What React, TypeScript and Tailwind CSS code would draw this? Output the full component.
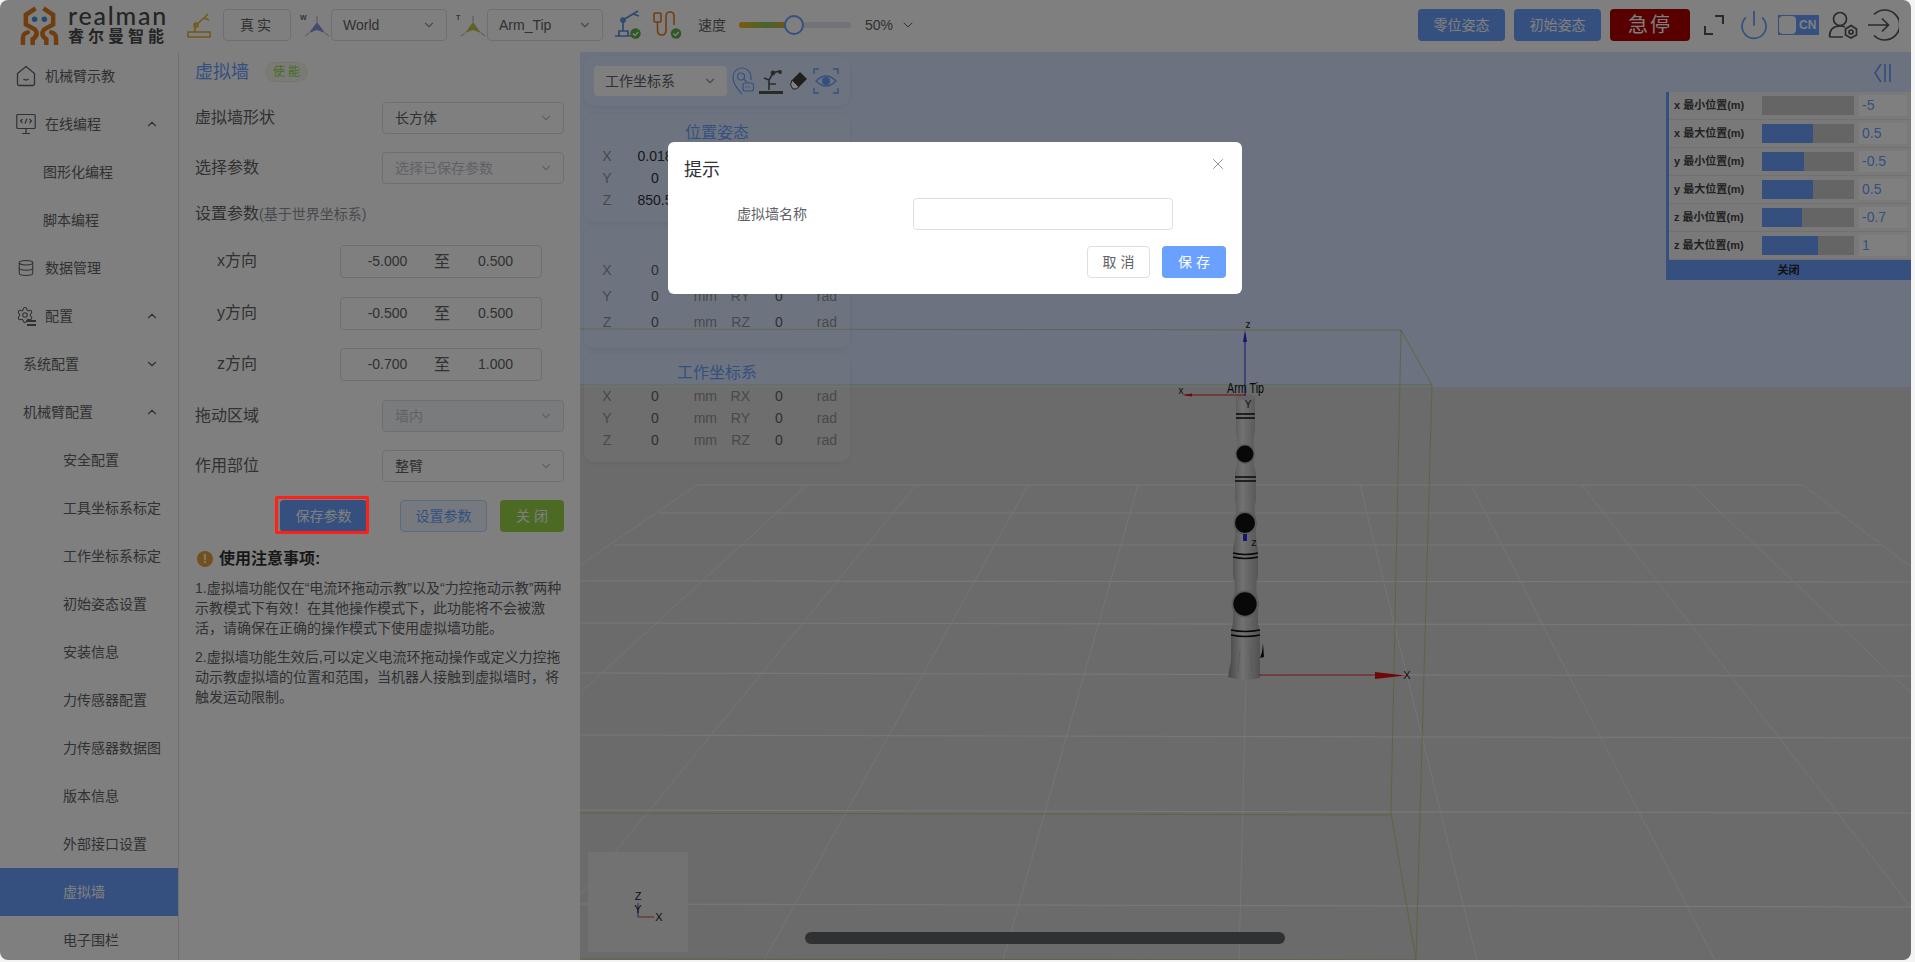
import React from 'react';
import { ChevronDown, ChevronUp, Database, Settings, Power, X } from 'lucide-react';

const menu = [
  { label: '机械臂示教', pad: 'pl-[16px]', icon: 'home' },
  { label: '在线编程', pad: 'pl-[16px]', icon: 'code', arrow: 'up' },
  { label: '图形化编程', pad: 'pl-[43px]' },
  { label: '脚本编程', pad: 'pl-[43px]' },
  { label: '数据管理', pad: 'pl-[16px]', icon: 'data' },
  { label: '配置', pad: 'pl-[16px]', icon: 'config', arrow: 'up' },
  { label: '系统配置', pad: 'pl-[23px]', arrow: 'down' },
  { label: '机械臂配置', pad: 'pl-[23px]', arrow: 'up' },
  { label: '安全配置', pad: 'pl-[63px]' },
  { label: '工具坐标系标定', pad: 'pl-[63px]' },
  { label: '工作坐标系标定', pad: 'pl-[63px]' },
  { label: '初始姿态设置', pad: 'pl-[63px]' },
  { label: '安装信息', pad: 'pl-[63px]' },
  { label: '力传感器配置', pad: 'pl-[63px]' },
  { label: '力传感器数据图', pad: 'pl-[63px]' },
  { label: '版本信息', pad: 'pl-[63px]' },
  { label: '外部接口设置', pad: 'pl-[63px]' },
  { label: '虚拟墙', pad: 'pl-[63px]', active: true },
  { label: '电子围栏', pad: 'pl-[63px]' },
];

const limits = [
  { label: 'x 最小位置(m)', fill: 0, value: '-5' },
  { label: 'x 最大位置(m)', fill: 51, value: '0.5' },
  { label: 'y 最小位置(m)', fill: 42, value: '-0.5' },
  { label: 'y 最大位置(m)', fill: 51, value: '0.5' },
  { label: 'z 最小位置(m)', fill: 40, value: '-0.7' },
  { label: 'z 最大位置(m)', fill: 56, value: '1' },
];

const horizontals = [
  [697, 485, 1803, 485], [660, 513, 1839, 513], [615, 545, 1881, 545], [580, 581, 1911, 582],
  [580, 623, 1911, 625], [580, 673, 1911, 676], [580, 735, 1911, 738], [580, 810, 1911, 813], [580, 904, 1911, 907],
];

const fans = [
  [697, 485, 580, 565], [807, 485, 580, 693], [916, 485, 580, 895], [1028, 485, 764, 960], [1138, 485, 1003, 960],
  [1246, 680, 1239, 960], [1360, 485, 1477, 960], [1471, 485, 1715, 960], [1582, 485, 1911, 907], [1692, 485, 1911, 693],
  [1803, 485, 1911, 567],
];

const boxLines = [
  [580, 329, 1401, 330], [580, 385, 1432, 385], [1401, 330, 1432, 385], [1401, 330, 1391, 813], [1432, 385, 1416, 960],
  [580, 813, 1391, 815], [1391, 813, 1416, 960], [580, 959, 1416, 960],
];

function SidebarIcon({ name }: { name?: string }) {
  if (name === 'home') {
    return (
      <svg viewBox="0 0 20 22" className="w-5 h-[22px]" fill="none" stroke="#606266" strokeWidth="1.3">
        <path d="M10 1.5 L18.5 8.5 V19 a1.5 1.5 0 0 1 -1.5 1.5 H3 a1.5 1.5 0 0 1 -1.5 -1.5 V8.5 Z" />
        <path d="M7.5 14 q2.5 2 5 0" />
      </svg>
    );
  }
  if (name === 'code') {
    return (
      <svg viewBox="0 0 20 22" className="w-5 h-[22px]" fill="none" stroke="#606266" strokeWidth="1.2">
        <rect x="0.8" y="1.5" width="18.4" height="14" rx="1" />
        <path d="M6.5 6 L4.5 8 L6.5 10 M13.5 6 L15.5 8 L13.5 10 M11 5.5 L9 10.5 M10 15.5 V20 M6 20.5 H14" />
      </svg>
    );
  }
  if (name === 'data') return <Database className="w-[18px] h-5 mx-px text-[#606266]" strokeWidth={1.4} />;
  if (name === 'config') {
    return (
      <span className="relative w-5 h-5 block">
        <Settings className="w-[18px] h-[18px] text-[#606266]" strokeWidth={1.4} />
        <span className="absolute right-0 bottom-0 w-[9px] h-[6px] border-y-2 border-[#606266] bg-white" />
      </span>
    );
  }
  return null;
}

function Select({ text, placeholder, disabled }: { text: string; placeholder?: boolean; disabled?: boolean }) {
  return (
    <div
      className={`w-[182px] h-8 flex items-center justify-between pl-3 pr-[10px] border border-[#dcdfe6] rounded text-[14px] ${
        disabled ? 'bg-[#f5f7fa] text-[#c0c4cc]' : placeholder ? 'bg-white text-[#c0c4cc]' : 'bg-white text-[#606266]'
      }`}
    >
      <span>{text}</span>
      <ChevronDown className="w-[14px] h-[14px] text-[#c0c4cc]" />
    </div>
  );
}

function RangeRow({ label, from, to, className }: { label: string; from: string; to: string; className: string }) {
  return (
    <div className={`flex items-center h-[33px] pl-[38px] ${className}`}>
      <span className="w-[123px] pb-[2px] text-[16px] text-[#606266]">{label}</span>
      <div className="w-[202px] h-[33px] flex items-center border border-[#dcdfe6] rounded text-[14px] text-[#606266]">
        <span className="w-[93px] text-center">{from}</span>
        <span className="w-4 text-center text-[16px]">至</span>
        <span className="flex-1 text-center">{to}</span>
      </div>
    </div>
  );
}

function PoseCard({ title, rows, className, rowClass, dark }: { title?: string; rows: string[][]; className: string; rowClass: string; dark?: boolean }) {
  return (
    <div className={`rounded-[10px] bg-white/15 shadow-[0_1px_4px_rgba(0,0,0,0.05)] ${className}`}>
      <div className="h-[23px] text-center text-[16px] leading-[22px] text-[#6aa1ff]">{title}</div>
      {rows.map((r) => (
        <div key={r[0]} className={`grid grid-cols-[46px_50px_37px_33px_58px_29px] items-center text-[14px] leading-[22px] ${rowClass}`}>
          <span className="text-center text-[#909399]">{r[0]}</span>
          <span className={`text-center whitespace-nowrap ${dark ? 'text-[#303133]' : 'text-[#606266]'}`}>{r[1]}</span>
          <span className="text-right text-[#909399]">mm</span>
          <span className="text-right text-[#909399]">R{r[0]}</span>
          <span className="text-center text-[#606266]">0</span>
          <span className="text-right text-[#909399]">rad</span>
        </div>
      ))}
    </div>
  );
}

function Logo() {
  return (
    <div className="flex items-center w-[187px] h-full">
      <svg viewBox="0 0 40 40" className="ml-[20px] w-[39px] h-[39px]" fill="none" stroke="#e07d1c" strokeWidth="4.6">
        <path d="M16 2.5 L6 9 V19 L16 24.5" />
        <path d="M24 2.5 L34 9 V19 L24 24.5" />
        <path d="M3 39 V33 Q3 28 8 27 M37 39 V33 Q37 28 32 27" strokeLinecap="round" />
        <path d="M16 25 Q19 30 13 34 V39 M24 25 Q21 30 27 34 V39" strokeLinecap="round" />
        <circle cx="15" cy="13.5" r="2.8" fill="#4d8fdc" stroke="none" />
        <circle cx="25" cy="13.5" r="2.8" fill="#4d8fdc" stroke="none" />
      </svg>
      <div className="ml-[9px] flex flex-col">
        <span className="font-['Lato',sans-serif] font-medium text-[25px] leading-[22px] tracking-[1.8px] text-[#4a4a4a] -mt-[2px]">realman</span>
        <span className="mt-[3px] text-[16px] leading-[15px] font-bold tracking-[4px] whitespace-nowrap text-[#4a4a4a]">睿尔曼智能</span>
      </div>
    </div>
  );
}

function ArmIcon() {
  return (
    <svg viewBox="0 0 24 26" className="w-6 h-[26px]" fill="none" stroke="#e8b232" strokeWidth="1.6">
      <rect x="1" y="20" width="22" height="5" />
      <path d="M8 20 V15 L9 13 L17 6 M17 6 L21 2 M17 6 L22 8" />
      <circle cx="9" cy="13" r="2" />
    </svg>
  );
}

function FrameIcon({ letter, color }: { letter: string; color: string }) {
  return (
    <svg viewBox="0 0 30 24" className="w-[30px] h-6">
      <text x="0" y="7" fontSize="7" fontWeight="700" fill="#666">{letter}</text>
      <path d="M17 9 L9 20 L17 17 L25 20 Z" fill={color} />
      <path d="M17 3 V9" stroke="#aaa" strokeWidth="1" />
      <path d="M5 23 L9 20 M25 20 L29 23" stroke="#aaa" strokeWidth="1" />
    </svg>
  );
}

function CheckBadge({ x, y }: { x: number; y: number }) {
  return (
    <g>
      <circle cx={x} cy={y} r="5.2" fill="#5fb04a" stroke="none" />
      <path d={`M${x - 2.6} ${y} l2 2 l3.4 -3.6`} fill="none" stroke="#fff" strokeWidth="1.4" />
    </g>
  );
}

function Header() {
  return (
    <header className="h-[52px] pb-[2px] flex items-center shrink-0 bg-white">
      <Logo />
      <ArmIcon />
      <div className="ml-3 w-[68px] h-8 flex items-center justify-center border border-[#dcdfe6] rounded text-[14px] tracking-[3px] text-[#606266]">真实</div>
      <div className="ml-[9px]"><FrameIcon letter="W" color="#8a96e0" /></div>
      <div className="ml-px w-[116px] h-8 flex items-center justify-between pl-[11px] pr-[10px] border border-[#dcdfe6] rounded text-[14px] text-[#606266]">
        World<ChevronDown className="w-[14px] h-[14px] text-[#909399]" />
      </div>
      <div className="ml-[9px]"><FrameIcon letter="T" color="#c4c450" /></div>
      <div className="ml-px w-[116px] h-8 flex items-center justify-between pl-[11px] pr-[10px] border border-[#dcdfe6] rounded text-[14px] text-[#606266]">
        Arm_Tip<ChevronDown className="w-[14px] h-[14px] text-[#909399]" />
      </div>
      <svg viewBox="0 0 28 30" className="ml-[11px] w-7 h-[30px]" fill="none" stroke="#5c8fe0" strokeWidth="1.7">
        <path d="M1 26 H18 M5 26 V21 H14 V26 M9 21 V10 L19 4 M19 4 L24 1 M19 4 L25 6" />
        <circle cx="9" cy="10" r="2" />
        <CheckBadge x={21.5} y={23.5} />
      </svg>
      <svg viewBox="0 0 30 30" className="ml-[11px] w-[30px] h-[30px]" fill="none" stroke="#e07d1c" strokeWidth="1.6">
        <rect x="1" y="3" width="7" height="9" rx="1" />
        <path d="M4.5 12 V20 Q4.5 25 9 25 Q13 25 13 20 V6 Q13 2 17 2 Q21 2 21 6 V15" />
        <CheckBadge x={23} y={23.5} />
      </svg>
      <span className="ml-[15px] text-[14px] text-[#606266]">速度</span>
      <div className="ml-[13px] relative w-[112px] h-[6px] rounded-full bg-[#e4e7ed]">
        <div className="w-[55px] h-[6px] rounded-full bg-gradient-to-r from-[#f2b416] via-[#86c85a] to-[#ef9a2a]" />
        <div className="absolute left-[45px] top-[-7px] w-5 h-5 rounded-full border-[2.5px] border-[#6aa1ff] bg-white" />
      </div>
      <span className="ml-[14px] text-[14px] text-[#606266]">50%</span>
      <ChevronDown className="ml-[7px] w-4 h-4 text-[#606266]" strokeWidth={1.5} />

      <div className="ml-auto flex items-center">
        <div className="w-[87px] h-8 flex items-center justify-center rounded bg-[#6aa1ff] text-[14px] text-white">零位姿态</div>
        <div className="ml-[9px] w-[87px] h-8 flex items-center justify-center rounded bg-[#6aa1ff] text-[14px] text-white">初始姿态</div>
        <div className="ml-[9px] w-[80px] h-8 flex items-center justify-center rounded bg-[#b00000] text-[20px] tracking-[2px] text-white">急停</div>
        <svg viewBox="0 0 22 22" className="ml-[13px] w-[22px] h-[22px]" fill="none" stroke="#555" strokeWidth="2">
          <path d="M12 2 H20 V10 M2 12 V20 H10" />
        </svg>
        <Power className="ml-[13px] w-8 h-8 text-[#6aa1ff]" strokeWidth={1.3} />
        <div className="ml-[8px] w-[41px] h-5 flex items-center bg-[#6aa1ff] pl-px">
          <span className="w-[17px] h-[18px] rounded-sm bg-white" />
          <span className="ml-[3px] text-[12px] font-bold text-white">CN</span>
        </div>
        <svg viewBox="0 0 30 28" className="ml-[9px] w-[30px] h-7" fill="none" stroke="#555" strokeWidth="1.7">
          <circle cx="12" cy="8" r="6.5" />
          <path d="M1.5 26 Q1.5 15 12 15 Q15 15 17 16 M1.5 26 H15" />
          <path d="M23 14.5 L28.5 18 V24 L23 27 L17.5 24 V18 Z" />
          <circle cx="23" cy="21" r="2" />
        </svg>
        <svg viewBox="0 0 32 32" className="ml-[9px] mr-3 w-8 h-8" fill="none" stroke="#555" strokeWidth="1.7">
          <path d="M7 5.5 A15 15 0 1 1 7 26.5 M1 16 H21 M15 9.5 L21.5 16 L15 22.5" />
        </svg>
      </div>
    </header>
  );
}

function Sidebar() {
  return (
    <aside className="w-[179px] shrink-0 border-r border-[#e0e0e0] bg-white overflow-hidden">
      {menu.map((m) => (
        <div
          key={m.label}
          className={`h-12 flex items-center text-[14px] ${m.pad} ${m.active ? 'bg-[#6aa1ff] text-white' : 'text-[#606266]'}`}
        >
          {m.icon && <span className="w-5 mr-[9px] flex justify-center"><SidebarIcon name={m.icon} /></span>}
          <span>{m.label}</span>
          {m.arrow === 'up' && <ChevronUp className="ml-auto mr-[19px] w-[14px] h-[14px]" />}
          {m.arrow === 'down' && <ChevronDown className="ml-auto mr-[19px] w-[14px] h-[14px]" />}
        </div>
      ))}
    </aside>
  );
}

function WallPanel() {
  return (
    <section className="w-[401px] shrink-0 bg-white pt-[10px]">
      <div className="flex items-center h-5 pl-4">
        <span className="text-[18px] text-[#6aa1ff]">虚拟墙</span>
        <span className="ml-4 w-[43px] h-5 flex items-center justify-center pl-[3px] rounded-full bg-[#f0f9eb] border border-[#e1f3d8] text-[12px] tracking-[3px] text-[#9ad44a]">使能</span>
      </div>
      <div className="mt-5 flex items-center justify-between pl-4 pr-4">
        <span className="text-[16px] text-[#606266]">虚拟墙形状</span>
        <Select text="长方体" />
      </div>
      <div className="mt-[18px] flex items-center justify-between pl-4 pr-4">
        <span className="text-[16px] text-[#606266]">选择参数</span>
        <Select text="选择已保存参数" placeholder />
      </div>
      <div className="mt-[14px] h-8 flex items-center pl-4 text-[#606266]">
        <span className="text-[16px]">设置参数</span>
        <span className="text-[14px] text-[#909399]">(基于世界坐标系)</span>
      </div>
      <RangeRow className="mt-[15px]" label="x方向" from="-5.000" to="0.500" />
      <RangeRow className="mt-[19px]" label="y方向" from="-0.500" to="0.500" />
      <RangeRow className="mt-[18px]" label="z方向" from="-0.700" to="1.000" />
      <div className="mt-[19px] flex items-center justify-between pl-4 pr-4">
        <span className="text-[16px] text-[#606266]">拖动区域</span>
        <Select text="墙内" disabled />
      </div>
      <div className="mt-[18px] flex items-center justify-between pl-4 pr-4">
        <span className="text-[16px] text-[#606266]">作用部位</span>
        <Select text="整臂" />
      </div>
      <div className="mt-[18px] flex justify-end pr-4 text-[14px]">
        <div className="w-[87px] h-8 flex items-center justify-center rounded bg-[#6aa1ff] text-white">保存参数</div>
        <div className="ml-[33px] w-[87px] h-8 flex items-center justify-center rounded bg-[#ecf5ff] border border-[#b3d8ff] text-[#6aa1ff]">设置参数</div>
        <div className="ml-[13px] w-16 h-8 flex items-center justify-center rounded bg-[#9ad44a] text-white">关 闭</div>
      </div>
      <div className="mt-[17px] flex items-center h-5 pl-[18px]">
        <span className="w-4 h-4 rounded-full bg-[#e6a23c] flex items-center justify-center text-[12px] font-bold text-white">!</span>
        <span className="ml-[6px] text-[16px] font-bold text-[#303133]">使用注意事项:</span>
      </div>
      <p className="mt-[9px] pl-4 text-[14px] leading-[20px] text-[#606266] whitespace-nowrap">
        1.虚拟墙功能仅在“电流环拖动示教”以及“力控拖动示教”两种<br />
        示教模式下有效！在其他操作模式下，此功能将不会被激<br />
        活，请确保在正确的操作模式下使用虚拟墙功能。
      </p>
      <p className="mt-[9px] pl-4 text-[14px] leading-[20px] text-[#606266] whitespace-nowrap">
        2.虚拟墙功能生效后,可以定义电流环拖动操作或定义力控拖<br />
        动示教虚拟墙的位置和范围，当机器人接触到虚拟墙时，将<br />
        触发运动限制。
      </p>
    </section>
  );
}

function Scene() {
  return (
    <svg viewBox="580 52 1331 908" className="absolute inset-0 w-full h-full">
      <defs>
        <linearGradient id="body" x1="0" x2="1" y1="0" y2="0">
          <stop offset="0" stopColor="#8c8c8c" />
          <stop offset="0.45" stopColor="#e4e4e4" />
          <stop offset="1" stopColor="#a4a4a4" />
        </linearGradient>
      </defs>
      <rect x="580" y="387" width="1331" height="573" fill="#d6d6d6" />
      {fans.map((l) => (
        <line key={l.join()} x1={l[0]} y1={l[1]} x2={l[2]} y2={l[3]} stroke="#ececec" strokeWidth="0.9" />
      ))}
      {horizontals.map((l) => (
        <line key={l.join()} x1={l[0]} y1={l[1]} x2={l[2]} y2={l[3]} stroke="#f0f0f0" strokeWidth="1.2" />
      ))}
      {boxLines.map((l) => (
        <line key={l.join()} x1={l[0]} y1={l[1]} x2={l[2]} y2={l[3]} stroke="#a9c86a" strokeOpacity="0.75" strokeWidth="1" />
      ))}

      <path
        d="M1236 396 L1236 432 Q1239 444 1236 454 Q1239 464 1235 472 L1235 500 Q1238 510 1234 523 Q1237 535 1233 548 L1233 575 Q1237 590 1232 604 Q1235 618 1231 632 L1231 660 L1228 677 Q1243 682 1260 678 L1260 632 Q1256 618 1259 604 Q1254 590 1258 575 L1258 548 Q1254 535 1257 523 Q1253 510 1256 500 L1256 472 Q1252 464 1255 454 Q1252 444 1255 432 L1255 396 Z"
        fill="url(#body)"
      />
      <ellipse cx="1245" cy="397" rx="11" ry="3" fill="#c8c8c8" />
      <path d="M1236 414 H1255 M1236 418 H1255 M1235 477 H1256 M1235 481 H1256 M1233 553 Q1245 556 1258 553 M1233 557 Q1245 560 1258 557 M1231 630 Q1245 633 1260 630 M1231 635 Q1245 638 1260 635" stroke="#111" strokeWidth="1.5" fill="none" />
      <path d="M1238 672 L1240 650 M1252 672 L1250 650" stroke="#b0b0b0" strokeWidth="0.8" />
      <circle cx="1245" cy="454" r="10" fill="#b4b4b4" />
      <circle cx="1245" cy="523" r="11.5" fill="#b4b4b4" />
      <circle cx="1245" cy="604" r="13.5" fill="#b4b4b4" />
      <circle cx="1245" cy="454" r="8.5" fill="#111" />
      <circle cx="1245" cy="523" r="10" fill="#111" />
      <circle cx="1245" cy="604" r="11.7" fill="#111" />
      <path d="M1263 643 L1264 657 L1260 658 L1262 652 Z" fill="#111" />
      <rect x="1243" y="534" width="4" height="7" fill="#2a2ad8" />

      <line x1="1259" y1="675" x2="1378" y2="675" stroke="#e01a1a" strokeWidth="1" />
      <path d="M1375 672 L1405 675.5 L1375 679 Z" fill="#e01010" />
      <line x1="1245" y1="336" x2="1245" y2="396" stroke="#2a2ad8" strokeWidth="1" />
      <path d="M1245 330 L1243 342 H1247 Z" fill="#2a2ad8" />
      <line x1="1185" y1="395" x2="1245" y2="395" stroke="#e01a1a" strokeWidth="1" />
      <path d="M1182 395 L1192 393.5 V396.5 Z" fill="#e01010" />

      <g fontFamily="'Liberation Sans', sans-serif" fill="#222">
        <text x="1245.5" y="393" fontSize="14" textAnchor="middle" textLength="37" lengthAdjust="spacingAndGlyphs" fill="#111">Arm Tip</text>
        <text x="1248" y="328" fontSize="10" textAnchor="middle">z</text>
        <text x="1181" y="394" fontSize="10" textAnchor="middle">x</text>
        <text x="1248" y="408" fontSize="10" textAnchor="middle">Y</text>
        <text x="1254" y="546" fontSize="11" textAnchor="middle">z</text>
        <text x="1407" y="679" fontSize="11" textAnchor="middle">X</text>
      </g>
    </svg>
  );
}

function Viewer() {
  const row = (r: string, v: string) => [r, v];
  return (
    <main className="relative flex-1 overflow-hidden bg-[#d8e4ff]">
      <Scene />
      <div className="absolute left-1 top-1 w-[266px] flex flex-col">
        <div className="h-[50px] rounded-[10px] bg-white/15 shadow-[0_1px_4px_rgba(0,0,0,0.05)] flex items-center pl-[10px]">
          <div className="w-[133px] h-[30px] flex items-center justify-between pl-[11px] pr-[10px] rounded bg-white text-[14px] text-[#606266]">
            工作坐标系<ChevronDown className="w-[14px] h-[14px] text-[#909399]" />
          </div>
          <svg viewBox="0 0 22 28" className="ml-[5px] w-[22px] h-7" fill="none" stroke="#6aa1ff" strokeWidth="1.2">
            <path d="M10 27 C3 20 1 14 1 10 A9 9 0 0 1 19 10 V13" />
            <circle cx="9" cy="9.5" r="3.5" />
            <path d="M11.5 12 L15 15" />
            <rect x="11" y="16" width="10.5" height="8" rx="2" />
            <path d="M13.5 20 H19" strokeDasharray="1.4 1.4" />
          </svg>
          <svg viewBox="0 0 26 26" className="ml-[4px] w-[26px] h-[26px]" fill="none" stroke="#555" strokeWidth="1.6">
            <path d="M1 24.5 H25" strokeWidth="3" />
            <path d="M11 22 V12 L15 5 L21 3 M11 12 L6 10 M11 16 H18" />
            <circle cx="15" cy="5" r="1.6" fill="#555" />
            <circle cx="22" cy="4" r="1.2" fill="#555" />
          </svg>
          <svg viewBox="0 0 18 20" className="ml-[6px] w-[18px] h-5">
            <path d="M10 1 L17 8 L9 16 L2 9 Z" fill="#3f3f3f" />
            <path d="M2 9 L9 16 L6 18 H3 L0.5 14 Z" fill="#fff" stroke="#3f3f3f" strokeWidth="1" />
          </svg>
          <svg viewBox="0 0 26 26" className="ml-[5px] w-[26px] h-[26px]" fill="none" stroke="#6aa1ff" strokeWidth="1.4">
            <path d="M1 6 V1 H6 M20 1 H25 V6 M25 20 V25 H20 M6 25 H1 V20" />
            <path d="M3 13 Q13 3 23 13 Q13 23 3 13 Z" />
            <circle cx="13" cy="13" r="3.4" fill="#6aa1ff" />
          </svg>
        </div>
        <PoseCard
          className="mt-2 h-[108px] pt-[8px]"
          rowClass=""
          title="位置姿态"
          dark
          rows={[row('X', '0.018'), row('Y', '0'), row('Z', '850.5')]}
        />
        <PoseCard
          className="mt-[6px] h-[120px] pt-[4px]"
          rowClass="mt-1"
          title=""
          rows={[row('X', '0'), row('Y', '0'), row('Z', '0')]}
        />
        <PoseCard
          className="mt-[6px] h-[108px] pt-[8px]"
          rowClass=""
          title="工作坐标系"
          rows={[row('X', '0'), row('Y', '0'), row('Z', '0')]}
        />
      </div>

      <svg viewBox="0 0 18 20" className="absolute right-[19px] top-[11px] w-[18px] h-5" fill="none" stroke="#6aa1ff" strokeWidth="1.8">
        <path d="M7 1 L1 10 L7 19 M11 1 V19 M16 1 V19" />
      </svg>

      <div className="absolute right-0 top-10 w-[245px] bg-white border-l-[3px] border-[#6aa1ff]">
        {limits.map((l) => (
          <div key={l.label} className="h-7 pb-px flex items-center bg-[#f2f2f2] border-b border-[#e3e3e3]">
            <span className="w-[93px] pl-[5px] text-[11px] font-bold text-[#444] whitespace-nowrap">{l.label}</span>
            <div className="w-[92px] h-[19px] bg-[#cbcbcd]">
              <div className="h-full bg-[#6aa1ff]" style={{ width: l.fill }} />
            </div>
            <span className="ml-[5px] w-12 h-[21px] pl-[3px] bg-white text-[14px] leading-[21px] text-[#6aa1ff]">{l.value}</span>
          </div>
        ))}
        <div className="-ml-[3px] h-5 bg-[#6aa1ff] text-center text-[11px] font-bold leading-5 text-[#222]">关闭</div>
      </div>

      <div className="absolute left-2 bottom-2 w-[100px] h-[100px] bg-[#e5e5e5]">
        <svg viewBox="0 0 100 100" className="w-full h-full" fill="none">
          <line x1="50" y1="51" x2="50" y2="65" stroke="#4444cc" />
          <line x1="50" y1="65" x2="66" y2="65" stroke="#d64040" />
          <g fontFamily="'Liberation Sans', sans-serif" fontSize="11" fill="#222">
            <text x="50" y="48" textAnchor="middle">Z</text>
            <text x="50" y="61" textAnchor="middle">Y</text>
            <text x="71" y="69" textAnchor="middle">X</text>
          </g>
        </svg>
      </div>

      <div className="absolute left-[225px] bottom-4 w-[480px] h-3 rounded-full bg-[#606266]" />
    </main>
  );
}

function Dialog() {
  return (
    <div className="absolute left-[668px] top-[142px] w-[574px] h-[152px] rounded-md bg-white flex flex-col">
      <div className="relative h-[42px] pt-[17px] pl-4 text-[18px] leading-[22px] text-[#303133]">
        提示
        <X className="absolute right-[15px] top-[13px] w-[18px] h-[18px] text-[#909399]" strokeWidth={1.3} />
      </div>
      <div className="mt-[14px] flex items-center h-8">
        <span className="ml-[69px] w-[176px] text-[14px] text-[#606266]">虚拟墙名称</span>
        <div className="w-[260px] h-8 rounded border border-[#dcdfe6] bg-white" />
      </div>
      <div className="mt-4 flex justify-end pr-4 text-[14px]">
        <div className="w-[63px] h-8 flex items-center justify-center rounded border border-[#dcdfe6] text-[#606266]">取 消</div>
        <div className="ml-3 w-16 h-8 flex items-center justify-center rounded bg-[#6aa1ff] text-white">保 存</div>
      </div>
    </div>
  );
}

export default function App() {
  return (
    <div className="w-[1915px] h-[962px] bg-[#f4f4f4] font-['Liberation_Sans','Noto_Sans_CJK_SC',sans-serif]">
      <div className="relative w-[1911px] h-[960px] rounded-lg overflow-hidden flex flex-col bg-white">
        <Header />
        <div className="flex flex-1 min-h-0">
          <Sidebar />
          <WallPanel />
          <Viewer />
        </div>
        <div className="absolute inset-0 bg-black/50" />
        <div className="absolute left-[275px] top-[496px] w-[94px] h-[38px] rounded-[2px] border-[3px] border-[#ff2017]" />
        <Dialog />
      </div>
    </div>
  );
}
